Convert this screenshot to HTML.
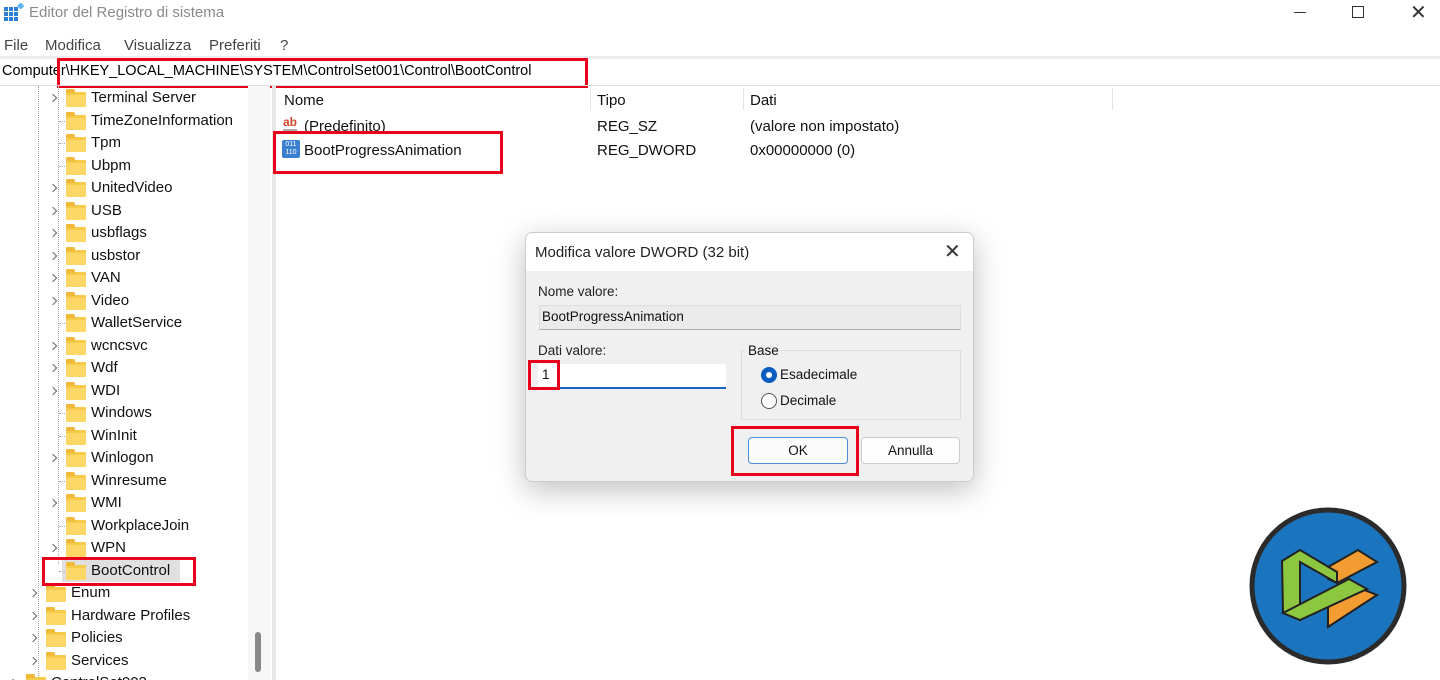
<!DOCTYPE html><html><head><meta charset="utf-8"><style>
*{margin:0;padding:0;box-sizing:border-box}
html,body{width:1440px;height:680px;overflow:hidden}
body{background:#fff;font-family:"Liberation Sans",sans-serif;font-size:15px;color:#111;position:relative}
.a{position:absolute;white-space:nowrap}
.f{position:absolute;width:20px;height:15px;background:#f7c948;border-radius:1px}
.f:before{content:"";position:absolute;left:0;top:-3px;width:9px;height:4px;background:#f0b93a;border-radius:1px 2px 0 0}
.f:after{content:"";position:absolute;left:0;top:3px;width:20px;height:12px;background:#fcd765;border-radius:1px}
.ex{position:absolute;width:6px;height:6px;border-right:1.3px solid #666;border-top:1.3px solid #666;transform:rotate(45deg)}
.red{position:absolute;border:3px solid #e8001c}
</style></head><body>
<svg class="a" style="left:4px;top:3px" width="20" height="20"><rect x="0" y="4" width="4" height="4" fill="#2a7fd4"/><rect x="5" y="4" width="4" height="4" fill="#2a7fd4"/><rect x="10" y="4" width="4" height="4" fill="#2a7fd4"/><rect x="0" y="9" width="4" height="4" fill="#2a7fd4"/><rect x="5" y="9" width="4" height="4" fill="#2a7fd4"/><rect x="10" y="9" width="4" height="4" fill="#2a7fd4"/><rect x="0" y="14" width="4" height="4" fill="#2a7fd4"/><rect x="5" y="14" width="4" height="4" fill="#2a7fd4"/><rect x="10" y="14" width="4" height="4" fill="#2a7fd4"/><rect x="14" y="0" width="5" height="5" fill="#5ab0f0" transform="rotate(45 16 3)"/></svg>
<div class="a" style="left:29px;top:4px;font-size:15px;color:#8a8a8a">Editor del Registro di sistema</div>
<div class="a" style="left:1294px;top:12px;width:12px;height:1px;background:#333"></div>
<div class="a" style="left:1352px;top:6px;width:12px;height:12px;border:1px solid #333"></div>
<div class="a" style="left:1410px;top:0;font-size:20px;color:#333">✕</div>
<div class="a" style="left:4px;top:37px;color:#444">File</div>
<div class="a" style="left:45px;top:37px;color:#444">Modifica</div>
<div class="a" style="left:124px;top:37px;color:#444">Visualizza</div>
<div class="a" style="left:209px;top:37px;color:#444">Preferiti</div>
<div class="a" style="left:280px;top:37px;color:#444">?</div>
<div class="a" style="left:0;top:56px;width:1440px;height:3px;background:#ececec"></div>
<div class="a" style="left:2px;top:63px;color:#000;font-size:14.5px">Computer\HKEY_LOCAL_MACHINE\SYSTEM\ControlSet001\Control\BootControl</div>
<div class="red" style="left:57px;top:58px;width:531px;height:30px"></div>
<div class="a" style="left:0;top:85px;width:1440px;height:1px;background:#ddd"></div>
<div class="a" style="left:38px;top:86px;width:1px;height:594px;border-left:1px dotted #aaa"></div>
<div class="a" style="left:58px;top:86px;width:1px;height:478px;border-left:1px dotted #aaa"></div>
<div id="tree"></div>
<div class="a" style="left:248px;top:86px;width:22px;height:594px;background:#f7f7f7"></div>
<div class="a" style="left:255px;top:632px;width:6px;height:40px;background:#888;border-radius:3px"></div>
<div class="a" style="left:272px;top:86px;width:4px;height:594px;background:#e6e6e6"></div>
<div class="a" style="left:284px;top:92px">Nome</div>
<div class="a" style="left:597px;top:92px">Tipo</div>
<div class="a" style="left:750px;top:92px">Dati</div>
<div class="a" style="left:590px;top:88px;width:1px;height:22px;background:#e5e5e5"></div>
<div class="a" style="left:743px;top:88px;width:1px;height:22px;background:#e5e5e5"></div>
<div class="a" style="left:1112px;top:88px;width:1px;height:22px;background:#e5e5e5"></div>
<div class="a" style="left:283px;top:116px;font-size:12px;font-weight:bold;color:#d2452c;border-bottom:2px solid #aaa;line-height:13px">ab</div>
<div class="a" style="left:304px;top:118px">(Predefinito)</div>
<div class="a" style="left:597px;top:118px">REG_SZ</div>
<div class="a" style="left:750px;top:118px">(valore non impostato)</div>
<div class="a" style="left:282px;top:140px;width:18px;height:18px;background:#3b7fd0;border-radius:2px;color:#fff;font-size:7px;line-height:8px;text-align:center;padding-top:1px">011<br>110</div>
<div class="a" style="left:304px;top:142px">BootProgressAnimation</div>
<div class="a" style="left:597px;top:142px">REG_DWORD</div>
<div class="a" style="left:750px;top:142px">0x00000000 (0)</div>
<div class="red" style="left:273px;top:131px;width:230px;height:43px"></div>
<div class="a" style="left:525px;top:232px;width:449px;height:250px;background:#f0f0f0;border:1px solid #ccc;border-radius:7px;box-shadow:0 8px 30px rgba(0,0,0,.25);overflow:hidden">
<div class="a" style="left:0;top:0;width:449px;height:38px;background:#fff"></div>
<div class="a" style="left:9px;top:11px;font-size:15px;color:#222">Modifica valore DWORD (32 bit)</div>
<div class="a" style="left:418px;top:6px;font-size:20px;color:#333">✕</div>
<div class="a" style="left:12px;top:51px;font-size:13.5px;color:#222">Nome valore:</div>
<div class="a" style="left:13px;top:72px;width:422px;height:25px;background:#ebebeb;border:1px solid #ddd;border-bottom:1px solid #aaa;font-size:13.5px;padding:3px 0 0 2px">BootProgressAnimation</div>
<div class="a" style="left:12px;top:110px;font-size:13.5px;color:#222">Dati valore:</div>
<div class="a" style="left:12px;top:131px;width:188px;height:25px;background:#fff;border-bottom:2px solid #1e62c2;font-size:13.5px;padding:3px 0 0 4px">1</div>
<div class="a" style="left:215px;top:117px;width:220px;height:70px;border:1px solid #ddd"></div>
<div class="a" style="left:219px;top:110px;font-size:13.5px;background:#f0f0f0;padding:0 3px">Base</div>
<div class="a" style="left:235px;top:134px;width:16px;height:16px;border-radius:50%;background:#0b5cc0"></div>
<div class="a" style="left:240px;top:139px;width:6px;height:6px;border-radius:50%;background:#fff"></div>
<div class="a" style="left:254px;top:134px;font-size:13.5px">Esadecimale</div>
<div class="a" style="left:235px;top:160px;width:16px;height:16px;border-radius:50%;border:1px solid #555;background:#fff"></div>
<div class="a" style="left:254px;top:160px;font-size:13.5px">Decimale</div>
<div class="a" style="left:222px;top:204px;width:100px;height:27px;background:#fbfbfb;border:1px solid #4a8fd8;border-radius:4px;text-align:center;font-size:13.5px;padding-top:5px">OK</div>
<div class="a" style="left:335px;top:204px;width:99px;height:27px;background:#fdfdfd;border:1px solid #ccc;border-radius:4px;text-align:center;font-size:13.5px;padding-top:5px">Annulla</div>
</div>
<div class="red" style="left:528px;top:360px;width:32px;height:30px"></div>
<div class="red" style="left:731px;top:426px;width:128px;height:50px"></div>
<svg class="a" style="left:1249px;top:507px" width="158" height="158" viewBox="0 0 158 158">
<circle cx="79" cy="79" r="76" fill="#1b75be" stroke="#2b2b2b" stroke-width="5"/>
<polygon points="79,60 109,43 128,55 88,76 79,72" fill="#f39c32" stroke="#222" stroke-width="2"/>
<polygon points="79,88 100,77 128,88 79,120" fill="#f39c32" stroke="#222" stroke-width="2"/>
<polygon points="33,54 51,43 88,65 88,76 51,55 51,113 34,106" fill="#8dc63f" stroke="#222" stroke-width="2"/>
<polygon points="34,106 100,72 118,82 51,113" fill="#8dc63f" stroke="#222" stroke-width="2"/>
</svg>
<script>
var items=[["Terminal Server",1,1],["TimeZoneInformation",1,0],["Tpm",1,0],["Ubpm",1,0],["UnitedVideo",1,1],["USB",1,1],["usbflags",1,1],["usbstor",1,1],["VAN",1,1],["Video",1,1],["WalletService",1,0],["wcncsvc",1,1],["Wdf",1,1],["WDI",1,1],["Windows",1,0],["WinInit",1,0],["Winlogon",1,1],["Winresume",1,0],["WMI",1,1],["WorkplaceJoin",1,0],["WPN",1,1],["BootControl",1,0],["Enum",0,1],["Hardware Profiles",0,1],["Policies",0,1],["Services",0,1],["ControlSet002",-1,1]];
var h="";items.forEach(function(it,i){var y=98+i*22.5;var off=it[1]==1?0:(it[1]==0?-20:-40);
if(i==21)h+='<div class="a" style="left:62px;top:'+(y-11)+'px;width:118px;height:22px;background:#e0e0e0"></div>';
if(it[2])h+='<div class="ex" style="left:'+(50+off)+'px;top:'+(y-3)+'px"></div>';
else h+='<div class="a" style="left:'+(59+off)+'px;top:'+y+'px;width:8px;border-top:1px dotted #aaa"></div>';
h+='<div class="f" style="left:'+(66+off)+'px;top:'+(y-6)+'px"></div>';
h+='<div class="a" style="left:'+(91+off)+'px;top:'+(y-9)+'px">'+it[0]+'</div>';});
document.getElementById("tree").innerHTML=h;
</script>
<div class="red" style="left:42px;top:557px;width:154px;height:29px"></div>
</body></html>
